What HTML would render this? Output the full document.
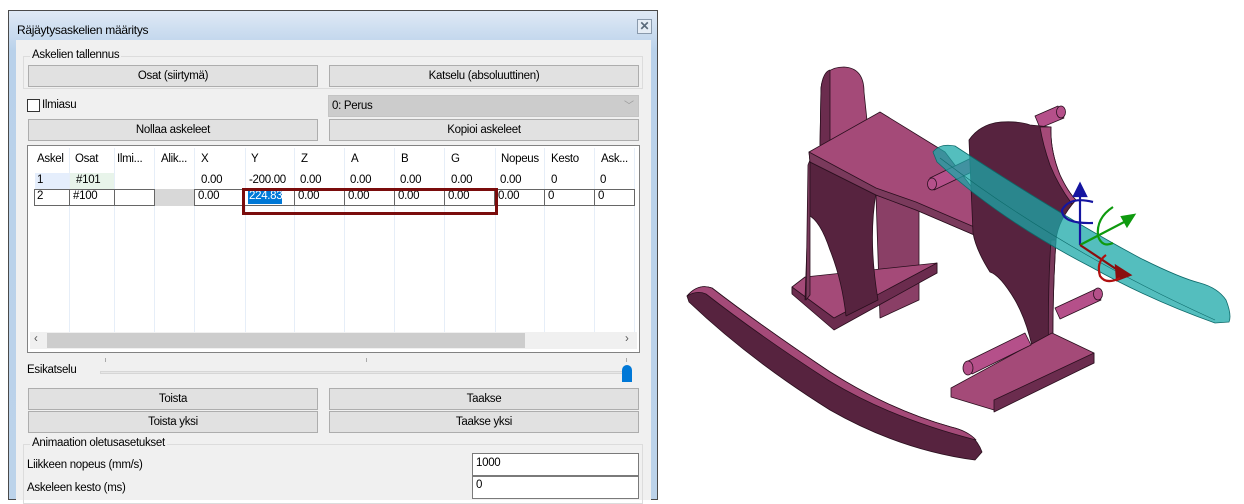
<!DOCTYPE html>
<html><head><meta charset="utf-8"><style>
*{box-sizing:border-box;margin:0;padding:0}
body{width:1244px;height:492px;background:#fff;position:relative;overflow:hidden;font-family:"Liberation Sans",sans-serif;font-size:11.5px;color:#000;letter-spacing:-0.3px}
.a{position:absolute}
.dlg{left:8px;top:10px;width:650px;height:490px;border:1px solid #4a4a4a;background:linear-gradient(#dfe9f5,#b9d1ea 40px,#bcd3ea)}
.cl{left:16px;top:40px;width:635px;height:460px;background:#f0f0f0}
.btn{position:absolute;background:#e1e1e1;border:1px solid #adadad;text-align:center;line-height:20px;height:22px}
.grp{position:absolute;border:1px solid #dcdcdc}
.lg{position:absolute;background:#f0f0f0;padding:0 2px}
.cell{position:absolute;top:0;height:100%;border-left:1px solid #e6eef8}
.t{position:absolute;white-space:nowrap}
.ib{position:absolute;background:#fff;border:1px solid #666;height:17px}
</style></head><body>
<div class="a dlg"></div>
<div class="t" style="left:17px;top:23px;font-size:12px">Räjäytysaskelien määritys</div>
<div class="a" style="left:637px;top:19px;width:15px;height:15px;border:1px solid #8a9aac;background:#e6edf5;text-align:center;line-height:12px;font-size:12px;font-weight:bold;color:#5a6a7a;letter-spacing:0">✕</div>
<div class="a cl"></div>

<div class="grp" style="left:23px;top:56px;width:620px;height:33px"></div>
<div class="lg" style="left:30px;top:49px">Askelien tallennus</div>
<div class="btn" style="left:28px;top:65px;width:290px">Osat (siirtymä)</div>
<div class="btn" style="left:329px;top:65px;width:310px">Katselu (absoluuttinen)</div>

<div class="a" style="left:27px;top:99px;width:13px;height:13px;border:1px solid #333;background:#fff"></div>
<div class="t" style="left:42px;top:99px">Ilmiasu</div>
<div class="a" style="left:328px;top:95px;width:311px;height:22px;background:#cccccc;border:1px solid #c4c4c4"></div>
<div class="t" style="left:332px;top:100px">0: Perus</div>
<div class="t" style="left:624px;top:97px;color:#999;font-size:10px">﹀</div>
<div class="btn" style="left:28px;top:119px;width:290px">Nollaa askeleet</div>
<div class="btn" style="left:329px;top:119px;width:310px">Kopioi askeleet</div>

<div class="a" style="left:27px;top:145px;width:613px;height:208px;border:1px solid #828282;background:#fff">
 <div class="a" style="left:2px;top:2px;width:607px;height:186px;overflow:hidden">
  <div class="cell" style="left:39px"></div><div class="cell" style="left:84px"></div><div class="cell" style="left:124px"></div><div class="cell" style="left:164px"></div><div class="cell" style="left:215px"></div><div class="cell" style="left:264px"></div><div class="cell" style="left:314px"></div><div class="cell" style="left:364px"></div><div class="cell" style="left:414px"></div><div class="cell" style="left:465px"></div><div class="cell" style="left:514px"></div><div class="cell" style="left:564px"></div><div class="cell" style="left:604px"></div>
 </div>
 <div class="a" style="left:2px;top:186px;width:607px;height:17px;background:#f0f0f0"></div>
 <div class="a" style="left:19px;top:187px;width:478px;height:15px;background:#cdcdcd"></div>
 <div class="t" style="left:6px;top:187px;color:#555">‹</div>
 <div class="t" style="left:597px;top:187px;color:#555">›</div>
</div>
<div class="t" style="top:153px;left:37px">Askel</div><div class="t" style="top:153px;left:75px">Osat</div><div class="t" style="top:153px;left:117px">Ilmi...</div><div class="t" style="top:153px;left:161px">Alik...</div><div class="t" style="top:153px;left:201px">X</div><div class="t" style="top:153px;left:251px">Y</div><div class="t" style="top:153px;left:301px">Z</div><div class="t" style="top:153px;left:351px">A</div><div class="t" style="top:153px;left:401px">B</div><div class="t" style="top:153px;left:451px">G</div><div class="t" style="top:153px;left:501px">Nopeus</div><div class="t" style="top:153px;left:551px">Kesto</div><div class="t" style="top:153px;left:601px">Ask...</div>
<div class="a" style="left:35px;top:173px;width:34px;height:16px;background:#e5eefc"></div>
<div class="a" style="left:70px;top:173px;width:44px;height:16px;background:#e8f4ea"></div>
<div class="t" style="top:174px;left:37px">1</div><div class="t" style="top:174px;left:76px">#101</div><div class="t" style="top:174px;left:201px">0.00</div><div class="t" style="top:174px;left:249px">-200.00</div><div class="t" style="top:174px;left:300px">0.00</div><div class="t" style="top:174px;left:350px">0.00</div><div class="t" style="top:174px;left:400px">0.00</div><div class="t" style="top:174px;left:451px">0.00</div><div class="t" style="top:174px;left:500px">0.00</div><div class="t" style="top:174px;left:551px">0</div><div class="t" style="top:174px;left:600px">0</div>
<div class="a" style="left:154px;top:189px;width:40px;height:17px;background:#d8d8d8"></div>
<div class="ib" style="left:34px;top:189px;width:36px"></div><div class="ib" style="left:69px;top:189px;width:46px"></div><div class="ib" style="left:114px;top:189px;width:41px"></div><div class="ib" style="left:194px;top:189px;width:51px"></div><div class="ib" style="left:244px;top:189px;width:51px"></div><div class="ib" style="left:294px;top:189px;width:51px"></div><div class="ib" style="left:344px;top:189px;width:51px"></div><div class="ib" style="left:394px;top:189px;width:51px"></div><div class="ib" style="left:444px;top:189px;width:51px"></div><div class="ib" style="left:494px;top:189px;width:51px"></div><div class="ib" style="left:544px;top:189px;width:51px"></div><div class="ib" style="left:594px;top:189px;width:41px"></div>
<div class="a" style="left:248px;top:191px;width:34px;height:13px;background:#0078d7"></div>
<div class="t" style="top:190px;left:37px">2</div><div class="t" style="top:190px;left:73px">#100</div><div class="t" style="top:190px;left:198px">0.00</div><div class="t" style="top:190px;left:249px;color:#fff">224.83</div><div class="t" style="top:190px;left:298px">0.00</div><div class="t" style="top:190px;left:348px">0.00</div><div class="t" style="top:190px;left:398px">0.00</div><div class="t" style="top:190px;left:448px">0.00</div><div class="t" style="top:190px;left:498px">0.00</div><div class="t" style="top:190px;left:548px">0</div><div class="t" style="top:190px;left:598px">0</div>
<div class="a" style="left:242px;top:188px;width:256px;height:27px;border:3px solid #7a0c0c"></div>

<div class="a" style="left:105px;top:358px;width:1px;height:4px;background:#aaa"></div>
<div class="a" style="left:366px;top:358px;width:1px;height:4px;background:#aaa"></div>
<div class="a" style="left:626px;top:358px;width:1px;height:4px;background:#aaa"></div>
<div class="t" style="left:27px;top:364px">Esikatselu</div>
<div class="a" style="left:100px;top:371px;width:530px;height:3px;background:#e7e7e7;border:1px solid #d6d6d6"></div>
<div class="a" style="left:622px;top:365px;width:10px;height:17px;background:#0078d7;border-radius:5px 5px 0 0"></div>
<div class="btn" style="left:28px;top:388px;width:290px">Toista</div>
<div class="btn" style="left:329px;top:388px;width:310px">Taakse</div>
<div class="btn" style="left:28px;top:411px;width:290px">Toista yksi</div>
<div class="btn" style="left:329px;top:411px;width:310px">Taakse yksi</div>
<div class="grp" style="left:23px;top:444px;width:620px;height:60px"></div>
<div class="lg" style="left:30px;top:437px">Animaation oletusasetukset</div>
<div class="t" style="left:27px;top:459px">Liikkeen nopeus (mm/s)</div>
<div class="a" style="left:472px;top:453px;width:167px;height:23px;border:1px solid #7a7a7a;background:#fff"></div>
<div class="t" style="left:476px;top:457px">1000</div>
<div class="t" style="left:27px;top:482px">Askeleen kesto (ms)</div>
<div class="a" style="left:472px;top:476px;width:167px;height:23px;border:1px solid #7a7a7a;background:#fff"></div>
<div class="t" style="left:476px;top:479px">0</div>

<svg class="a" style="left:0;top:0" width="1244" height="492" viewBox="0 0 1244 492">
<g stroke="#2a0f1e" stroke-width="0.8" stroke-linejoin="round">
<!-- left rocker -->
<path d="M687,296 Q698,283 712,288 Q760,325 830,372 Q890,410 951,427 Q975,432 982,452 L975,460 Q900,450 830,410 Q750,360 689,302 Z" fill="#57233f"/>
<path d="M687,296 Q698,283 712,288 Q760,325 830,372 Q890,410 951,427 Q968,431 976,440 Q890,418 828,380 Q760,336 706,294 Q697,290 687,296Z" fill="#a44a78"/>
<!-- back leg (lighter, behind) -->
<path d="M876,195 L919,210 L919,300 L880,318Z" fill="#8a3f66"/>
<!-- left base -->
<path d="M792,287 L805,277 L937,263 L937,273 L834,327 L792,293Z" fill="#a44a78"/>
<path d="M792,287 L834,318 L937,263 L937,273 L834,330 L792,294Z" fill="#6b2c4e"/>
<!-- left leg front -->
<path d="M810,162 L876,193 Q868,240 878,300 L846,316 Q842,280 830,250 Q820,220 808,215 L808,292 L805,300 Z" fill="#57233f"/>
<path d="M808,165 L810,160 L810,295 L806,300Z" fill="#7a3a5c"/>
<!-- head -->
<path d="M820,145 L821,88 Q823,67 844,67 Q864,68 864,92 L868,130 L838,148Z" fill="#a44a78"/>
<path d="M820,145 L821,88 Q823,72 830,70 L830,150Z" fill="#6b2c4e"/>
<!-- seat -->
<path d="M809,152 L880,112 L945,152 L998,222 L996,236 L986,240 L916,210 L876,195 L810,162Z" fill="#a44a78"/>
<path d="M809,152 L810,162 L876,195 L916,210 L986,240 L986,232 L916,202 L876,188Z" fill="#7a3a5c"/>
<!-- upper pegs -->
<path d="M930,178 L992,148 L997,160 L934,190 Z" fill="#b5508a"/>
<ellipse cx="932" cy="184" rx="4.5" ry="6" fill="#b5508a"/>
<path d="M1035,116 L1058,106 L1064,118 L1040,128Z" fill="#b5508a"/>
<ellipse cx="1061" cy="112" rx="4.5" ry="6" fill="#b5508a"/>
<!-- right big board -->
<path d="M969,140 Q980,124 1001,122 Q1020,121 1030,125 L1051,127 Q1050,150 1060,175 Q1068,192 1076,200 Q1058,220 1056,240 Q1052,300 1053,373 L1037,377 Q1032,330 1015,300 Q1000,275 990,272 Q976,250 973,233 Z" fill="#57233f"/>
<path d="M1040,127 L1051,127 Q1050,150 1060,175 Q1068,192 1076,200 L1072,204 Q1058,185 1050,165 Q1043,145 1040,127Z" fill="#a44a78"/>
<path d="M1056,240 Q1052,300 1053,373 L1049,374 Q1047,300 1051,240Z" fill="#7a3a5c"/>
<!-- right base -->
<path d="M951,388 L1052,333 L1094,353 L1094,363 L994,410 L951,397Z" fill="#a44a78"/>
<path d="M994,400 L1094,353 L1094,363 L994,412Z" fill="#6b2c4e"/>
<!-- lower pegs -->
<path d="M966,362 L1025,333 L1031,345 L972,374Z" fill="#b5508a"/>
<ellipse cx="968" cy="368" rx="5" ry="7" fill="#b5508a"/>
<path d="M1055,308 L1096,289 L1101,300 L1060,319Z" fill="#b5508a"/>
<ellipse cx="1098" cy="294" rx="4.5" ry="6" fill="#b5508a"/>
</g>
<!-- teal rocker -->
<path d="M933,152 Q940,143 955,146 Q1060,215 1140,258 Q1180,278 1200,283 Q1218,288 1226,300 Q1232,315 1229,322 L1215,323 Q1150,300 1091,267 Q1000,220 937,162Z" fill="#1ba8a8" fill-opacity="0.75" stroke="#0d6a6a" stroke-width="0.8"/>
<path d="M940,158 Q1060,250 1215,320" stroke="#0d6a6a" stroke-width="0.6" fill="none"/>
<!-- gizmo -->
<g fill="none" stroke-width="2.2">
<path d="M1080,245 L1080,192" stroke="#1515a0"/>
<path d="M1074,196 L1080,184 L1086,196Z" fill="#1515a0" stroke="#1515a0"/>
<path d="M1093,202 Q1070,196 1062,210 Q1062,224 1093,223" stroke="#1515a0"/>
<path d="M1080,245 L1128,220" stroke="#0f9a0f"/>
<path d="M1122,217 L1134,215 L1127,226Z" fill="#0f9a0f" stroke="#0f9a0f"/>
<path d="M1113,207 Q1096,218 1098,236 Q1102,248 1113,243" stroke="#0f9a0f"/>
<path d="M1080,245 L1122,273" stroke="#8a0e0e"/>
<path d="M1116,266 L1130,275 L1117,280Z" fill="#8a0e0e" stroke="#8a0e0e"/>
<path d="M1106,255 Q1096,262 1100,276 Q1106,285 1120,278" stroke="#b01010"/>
</g>
</svg>
</body></html>
